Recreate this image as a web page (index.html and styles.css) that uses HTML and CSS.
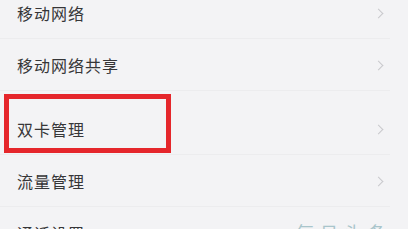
FILE: index.html
```html
<!DOCTYPE html>
<html lang="zh-CN">
<head>
    <meta charset="UTF-8">
    <meta name="viewport" content="width=device-width, initial-scale=1.0">
    <title>移动网络</title>
    <link rel="stylesheet" href="styles.css">
</head>
<body>

    <ul class="settings-list">
        <li class="row"><span class="label">移动网络</span><span class="chevron"></span></li>
        <li class="row"><span class="label">移动网络共享</span><span class="chevron"></span></li>
        <li class="row row-marked">
            <span class="label">双卡管理</span><span class="chevron"></span>
            <!-- Red annotation box -->
            <div class="mark"></div>
        </li>
        <li class="row"><span class="label">流量管理</span><span class="chevron"></span></li>
        <li class="row"><span class="label">通话设置</span><span class="watermark">每日头条</span></li>
    </ul>

</body>
</html>
```

FILE: styles.css
```css
body {
    margin: 0;
    width: 408px;
    height: 229px;
    overflow: hidden;
    background-color: #f3f3f5;
    font-family: 'Noto Sans CJK SC', 'Noto Sans', sans-serif;
    color: #363638;
}

.settings-list {
    list-style: none;
    margin: -13px 0 0 0;
    padding: 0;
}

.row {
    position: relative;
    display: flex;
    align-items: center;
    height: 52px;
    padding: 0 26px 0 17px;
    font-size: 16px;
}

.row::after {
    content: '';
    position: absolute;
    left: 0;
    right: 18px;
    bottom: 0;
    height: 1px;
    background-color: #ececee;
}

.row-marked {
    height: 64px;
    padding-top: 12px;
    box-sizing: border-box;
}

.label {
    flex: 1;
    letter-spacing: 1px;
}

.chevron {
    width: 6px;
    height: 6px;
    border-top: 1.3px solid #c9c9cc;
    border-right: 1.3px solid #c9c9cc;
    transform: rotate(45deg);
}

/* Annotation */
.mark {
    position: absolute;
    top: 3px;
    left: 4px;
    width: 157px;
    height: 49px;
    border: 5px solid #e5262b;
}

.watermark {
    align-self: flex-start;
    margin-top: 12px;
    margin-right: -10px;
    color: #a9c5cb;
    font-size: 18px;
    letter-spacing: 6px;
}
```
